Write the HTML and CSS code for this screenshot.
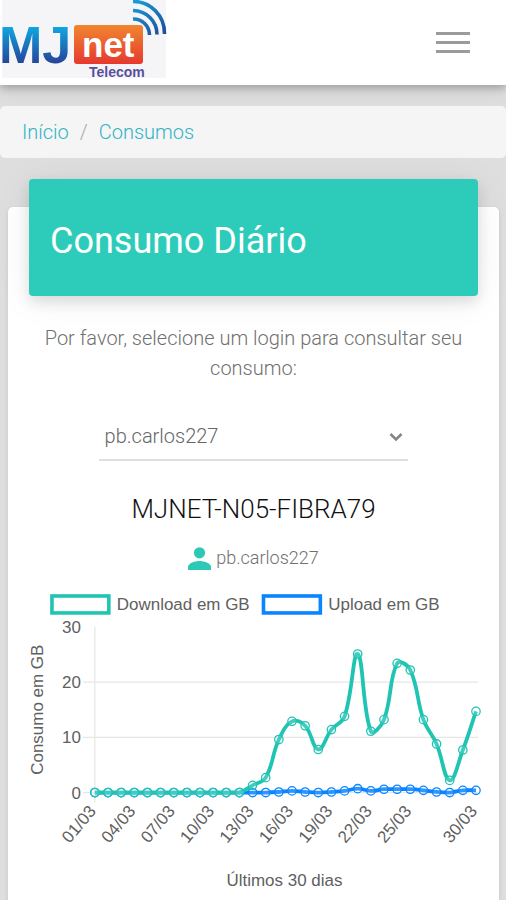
FILE: index.html
```html
<!DOCTYPE html>
<html lang="pt-BR">
<head>
  <meta charset="utf-8">
  <meta name="viewport" content="width=device-width, initial-scale=1">
  <title>Consumo Diário</title>
  <link rel="stylesheet" href="styles.css">
</head>
<body>
  <header class="navbar">
    <a class="brand" href="#" aria-label="MJ net Telecom">
      <svg width="168" height="80" viewBox="0 0 168 80">
        <defs>
          <linearGradient id="blue" x1="0" y1="0" x2="0" y2="1">
            <stop offset="0.2" stop-color="#10a4e0"/>
            <stop offset="0.85" stop-color="#273f96"/>
          </linearGradient>
          <linearGradient id="orange" x1="0" y1="0" x2="0" y2="1">
            <stop offset="0" stop-color="#f0862f"/>
            <stop offset="1" stop-color="#e6392f"/>
          </linearGradient>
          <linearGradient id="wave" gradientUnits="userSpaceOnUse" x1="133" y1="0" x2="160" y2="34">
            <stop offset="0" stop-color="#18a0dc"/>
            <stop offset="1" stop-color="#20509c"/>
          </linearGradient>
        </defs>
        <rect x="2" width="164" height="78" fill="#f5f5f7"/>
        <text class="logo-mj" x="-1" y="63" fill="url(#blue)">MJ</text>
        <rect x="74" y="25" width="69" height="39" rx="3" fill="url(#orange)"/>
        <text class="logo-net" x="82" y="57">net</text>
        <text class="logo-sub" x="89" y="77">Telecom</text>
        <g fill="none" stroke="url(#wave)" stroke-width="3.6">
          <path d="M133 1.5A31 32 0 0 1 164.500 34"/>
          <path d="M133 10.500A24 24 0 0 1 157 34.500"/>
          <path d="M133 19A16 16 0 0 1 149.500 35"/>
        </g>
      </svg>
    </a>
    <button class="toggler" type="button" aria-label="Menu">
      <span class="bar"></span><span class="bar"></span><span class="bar"></span>
    </button>
  </header>

  <nav class="breadcrumb">
    <a href="#">Início</a>
    <span class="slash">/</span>
    <a href="#">Consumos</a>
  </nav>

  <main class="card">
    <div class="card-header"><h1>Consumo Diário</h1></div>
    <label class="prompt" for="login">Por favor, selecione um login para consultar seu consumo:</label>
    <div class="select-wrap">
      <select id="login"><option>pb.carlos227</option></select>
      <svg class="chevron" width="14" height="10" viewBox="0 0 14 10"><path d="M1.500 2L7 7.500L12.500 2" fill="none" stroke="#858585" stroke-width="2.600"/></svg>
    </div>
    <h2>MJNET-N05-FIBRA79</h2>
    <p class="user">
      <svg width="23" height="23" viewBox="0 0 23 23" fill="#2bc9b6"><circle cx="11.500" cy="5.800" r="5.600"/><path d="M0 23v-3c0-4 7.500-6 11.500-6s11.500 2 11.500 6v3z"/></svg>
      <span>pb.carlos227</span>
    </p>
    <svg id="chart" class="chart" viewBox="0 0 450 310" role="img" aria-label="Consumo em GB, últimos 30 dias"></svg>
  </main>
  <script src="chart.js"></script>
</body>
</html>
```
FILE: styles.css
```css
* {
  box-sizing: border-box;
}

body {
  margin: 0;
  background: #dedede;
  color: #707070;
  font-family: Roboto, "Liberation Sans", sans-serif;
  font-size: 20px;
  font-weight: 300;
  line-height: 30px;
}

.navbar {
  display: flex;
  justify-content: space-between;
  align-items: center;
  height: 85px;
  padding-right: 36px;
  background: #fff;
  box-shadow: 0 3px 8px rgba(0, 0, 0, 0.25), 0 4px 20px rgba(0, 0, 0, 0.08);
}

.brand {
  align-self: flex-start;
  height: 80px;
}

.logo-mj,
.logo-net,
.logo-sub {
  font-family: "Liberation Sans", sans-serif;
  font-weight: 700;
}

.logo-mj {
  font-size: 52px;
}

.logo-net {
  font-size: 35px;
  fill: #fff;
}

.logo-sub {
  font-size: 14px;
  fill: #5750a0;
}

.toggler {
  display: flex;
  flex-direction: column;
  gap: 6px;
  padding: 0;
  border: 0;
  background: none;
}

.bar {
  width: 34px;
  height: 3px;
  background: #9b9b9b;
}

.breadcrumb {
  display: flex;
  gap: 11px;
  margin-top: 21px;
  padding: 11px 22px;
  border-radius: 5px;
  background: #f5f5f5;
}

.breadcrumb a {
  color: #2fb3c6;
  text-decoration: none;
}

.slash {
  color: #a8a8a8;
}

.card {
  display: flex;
  flex-direction: column;
  align-items: center;
  margin: 49px 7px 0 8px;
  padding: 0 21px 21px;
  border-radius: 5px;
  background: #fff;
  box-shadow: 0 2px 5px rgba(0, 0, 0, 0.1);
}

.card-header {
  align-self: stretch;
  margin-top: -28px;
  padding: 40px 21px 32px;
  border-radius: 4px;
  background: #2dccba;
  box-shadow: 0 6px 14px rgba(0, 0, 0, 0.12), 0 4px 40px rgba(0, 0, 0, 0.06);
}

h1 {
  margin: 0;
  color: #fff;
  font-size: 36px;
  font-weight: 400;
  line-height: 45px;
}

.prompt {
  margin-top: 27px;
  text-align: center;
}

.select-wrap {
  position: relative;
  width: 69%;
  margin-top: 30px;
}

select {
  width: 100%;
  height: 48px;
  padding: 0 6px;
  border: 0;
  border-bottom: 2px solid #e0e0e0;
  border-radius: 0;
  appearance: none;
  background: transparent;
  color: #666;
  font: 300 20px Roboto, sans-serif;
}

.chevron {
  position: absolute;
  top: 19px;
  right: 5px;
  pointer-events: none;
}

h2 {
  margin: 32px 0 0;
  color: #111;
  font-size: 26px;
  font-weight: 300;
  line-height: 32px;
}

.user {
  display: flex;
  align-items: center;
  gap: 5px;
  margin: 18px 0 16px;
  font-size: 18px;
}

.chart {
  display: block;
  width: 100%;
  overflow: visible;
  fill: #606060;
  font-family: "Liberation Sans", sans-serif;
  font-size: 17px;
  font-weight: 400;
}
```
FILE: chart.js
```js
const download = [0, 0, 0, 0, 0, 0, 0, 0, 0, 0, 0, 0, 1.3, 2.7, 9.6, 12.9, 12.1, 7.8, 11.4, 13.8, 25.1, 11.1, 13.2, 23.4, 22.2, 13.2, 8.8, 2.2, 7.7, 14.7];
const upload = [0, 0, 0, 0, 0, 0, 0, 0, 0, 0, 0, 0, 0, 0, 0.1, 0.3, 0.1, 0, 0.1, 0.3, 0.7, 0.3, 0.6, 0.6, 0.6, 0.4, 0.1, 0, 0.4, 0.4];

const area = { left: 66, right: 448, top: 38, bottom: 204 };
const max = 30;
const x = i => area.left + i * (area.right - area.left) / 29;
const y = v => area.bottom - v * (area.bottom - area.top) / max;

// Smoothed line through the points, tangents weighted by segment length.
function curve(data) {
  const pts = data.map((v, i) => [x(i), y(v)]);
  const clamp = v => Math.min(area.bottom, Math.max(area.top, v));
  const handles = pts.map((p, i) => {
    const a = pts[i - 1] || p, b = pts[i + 1] || p;
    const da = Math.hypot(p[0] - a[0], p[1] - a[1]);
    const db = Math.hypot(b[0] - p[0], b[1] - p[1]);
    const fa = 0.4 * da / (da + db), fb = 0.4 * db / (da + db);
    return {
      before: [p[0] - fa * (b[0] - a[0]), clamp(p[1] - fa * (b[1] - a[1]))],
      after: [p[0] + fb * (b[0] - a[0]), clamp(p[1] + fb * (b[1] - a[1]))]
    };
  });
  return "M" + pts[0] + pts.slice(1).map((p, i) => "C" + handles[i].after + " " + handles[i + 1].before + " " + p).join("");
}

function series(data, color) {
  const dots = data.map((v, i) => `<circle cx="${x(i)}" cy="${y(v)}" r="4.2" fill="rgba(255,255,255,.15)" stroke-width="1.3"/>`).join("");
  return `<g fill="none" stroke="${color}"><path d="${curve(data)}" stroke-width="3.8"/>${dots}</g>`;
}

const grid = [0, 10, 20].map(v => `<path d="M54 ${y(v)}H450" stroke="#e6e6e6" stroke-width="1.2"/>`).join("");
const scale = [0, 10, 20, 30].map(v => `<text x="52" y="${y(v) + 6}" text-anchor="end">${v}</text>`).join("");
const days = [1, 4, 7, 10, 13, 16, 19, 22, 25, 30].map(d =>
  `<text transform="translate(${x(d - 1) + 2} 223) rotate(-50)" text-anchor="end">${String(d).padStart(2, "0")}/03</text>`).join("");

document.getElementById("chart").innerHTML = `
  <rect x="23" y="7" width="57" height="17" fill="#fff" stroke="#20c4b2" stroke-width="3.6"/>
  <text x="88" y="21">Download em GB</text>
  <rect x="235" y="7" width="57" height="17" fill="#fff" stroke="#0a84ff" stroke-width="3.6"/>
  <text x="300" y="21">Upload em GB</text>
  ${grid}<path d="M${area.left} ${area.top}V${area.bottom + 10}" stroke="#e6e6e6" stroke-width="1.2"/>
  ${scale}${days}
  <text transform="translate(14 121) rotate(-90)" text-anchor="middle">Consumo em GB</text>
  <text x="256" y="298" text-anchor="middle">Últimos 30 dias</text>
  ${series(upload, "#0a84ff")}${series(download, "#20c4b2")}`;
```
